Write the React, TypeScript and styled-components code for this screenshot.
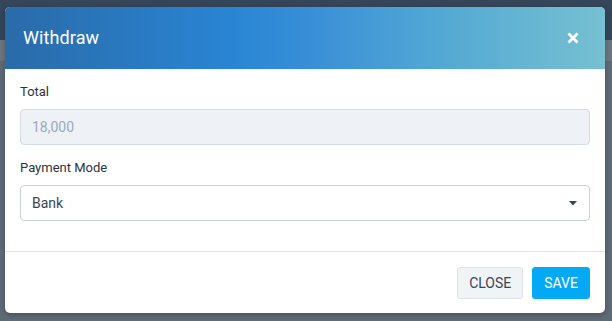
import React from "react";
import styled, { createGlobalStyle } from "styled-components";

const GlobalStyle = createGlobalStyle`
  html, body { margin: 0; padding: 0; }
  body {
    width: 612px;
    height: 321px;
    overflow: hidden;
    font-family: Roboto, "Liberation Sans", Arial, sans-serif;
  }
  * { box-sizing: border-box; }
`;

const Page = styled.div`
  position: relative;
  width: 612px;
  height: 321px;
  display: flex;
  flex-direction: column;
  background: #5f6b77;
`;

const NavBar = styled.div`
  height: 40px;
  background: #35465b;
`;

const SubBar = styled.div`
  height: 21px;
  background: #6d7782;
`;

const Modal = styled.div`
  position: absolute;
  left: 5px;
  top: 7px;
  width: 600px;
  background: #ffffff;
  border-radius: 5px;
  overflow: hidden;
  box-shadow: 0 2px 6px rgba(0, 0, 0, 0.25);
  display: flex;
  flex-direction: column;
`;

const Header = styled.div`
  height: 62px;
  display: flex;
  align-items: center;
  justify-content: space-between;
  padding: 0 25px 0 18px;
  background: linear-gradient(
    to right,
    #2a6ba9 0%,
    #2985d4 38%,
    #3a90d7 52%,
    #52a8d4 72%,
    #76c0d1 100%
  );
`;

const Title = styled.h4`
  margin: 0 0 2px 0;
  font-size: 18px;
  font-weight: 400;
  color: #ffffff;
  letter-spacing: 0.1px;
`;

const CloseIcon = styled.button`
  border: 0;
  padding: 0;
  background: transparent;
  width: 14px;
  height: 14px;
  display: flex;
  align-items: center;
  justify-content: center;
  cursor: pointer;
`;

const Body = styled.div`
  padding: 13px 15px 15px 15px;
  display: flex;
  flex-direction: column;
`;

const Group = styled.div<{ $last?: boolean }>`
  display: flex;
  flex-direction: column;
  margin-bottom: ${(p) => (p.$last ? "15px" : "13px")};
`;

const Label = styled.label`
  font-size: 13px;
  line-height: 20px;
  color: #2b3340;
  margin-bottom: 7px;
`;

const Field = styled.div<{ $disabled?: boolean }>`
  height: 36px;
  border: 1px solid ${(p) => (p.$disabled ? "#d3dbe5" : "#c7d0dc")};
  background: ${(p) => (p.$disabled ? "#eef1f6" : "#ffffff")};
  border-radius: 4px;
  display: flex;
  align-items: center;
  justify-content: space-between;
  padding: 0 12px 0 11px;
  font-size: 14px;
  color: ${(p) => (p.$disabled ? "#9aa9be" : "#3a4556")};
`;

const Divider = styled.div`
  height: 1px;
  background: #e4e6e9;
`;

const Footer = styled.div`
  display: flex;
  justify-content: flex-end;
  gap: 9px;
  padding: 15px 15px 14px 15px;
`;

const Button = styled.button<{ $primary?: boolean }>`
  height: 32px;
  padding: 0 11px;
  border-radius: 3px;
  font-family: Roboto, "Liberation Sans", Arial, sans-serif;
  font-size: 14px;
  text-transform: uppercase;
  border: 1px solid ${(p) => (p.$primary ? "#03a9f4" : "#dde3ea")};
  background: ${(p) => (p.$primary ? "#03a9f4" : "#f1f4f7")};
  color: ${(p) => (p.$primary ? "#ffffff" : "#3a4556")};
  cursor: pointer;
`;

export default function App() {
  return (
    <>
      <GlobalStyle />
      <Page>
        <NavBar />
        <SubBar />
        <Modal>
          <Header>
            <Title>Withdraw</Title>
            <CloseIcon aria-label="Close">
              <svg width="12" height="12" viewBox="0 0 12 12">
                <path
                  d="M1.5 1.5 L10.5 10.5 M10.5 1.5 L1.5 10.5"
                  stroke="#ffffff"
                  strokeWidth="2.8"
                  strokeLinecap="butt"
                />
              </svg>
            </CloseIcon>
          </Header>
          <Body>
            <Group>
              <Label>Total</Label>
              <Field $disabled>18,000</Field>
            </Group>
            <Group $last>
              <Label>Payment Mode</Label>
              <Field>
                <span>Bank</span>
                <svg width="8" height="5" viewBox="0 0 8 5">
                  <path d="M0 0 L8 0 L4 4.5 Z" fill="#3a4556" />
                </svg>
              </Field>
            </Group>
          </Body>
          <Divider />
          <Footer>
            <Button>Close</Button>
            <Button $primary>Save</Button>
          </Footer>
        </Modal>
      </Page>
    </>
  );
}
